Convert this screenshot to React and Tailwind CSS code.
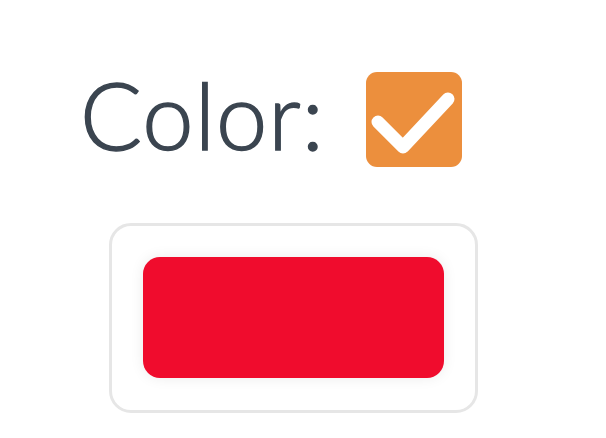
export default function App() {
  return (
    <div className="w-[606px] h-[438px] bg-white flex flex-col" style={{ fontFamily: "Lato, 'Open Sans', sans-serif" }}>
      <div className="flex items-center pl-[80px] pt-[72px] h-[167px]">
        <span className="pb-[10px] text-[92px] font-light leading-none text-[#3b4550] tracking-[1px] [-webkit-text-stroke:1.4px_#3b4550]">Color:</span>
        <div className="ml-[41px] w-[96px] h-[95px] rounded-[11px] bg-[#ec8f3d] flex items-center justify-center">
          <svg width="96" height="95" viewBox="0 0 96 95">
            <path d="M12 50 L37 75 L82 27" fill="none" stroke="white" strokeWidth="13" strokeLinecap="round" strokeLinejoin="round" />
          </svg>
        </div>
      </div>
      <div className="pl-[109px] pt-[56px]">
        <div className="w-[369px] h-[190px] border-[3px] border-[#e6e6e6] rounded-[22px] p-[31px]">
          <div className="w-[301px] h-[121px] rounded-[17px] bg-[#f00c2d] shadow-[0_0_14px_rgba(0,0,0,0.08)]" />
        </div>
      </div>
    </div>
  );
}
